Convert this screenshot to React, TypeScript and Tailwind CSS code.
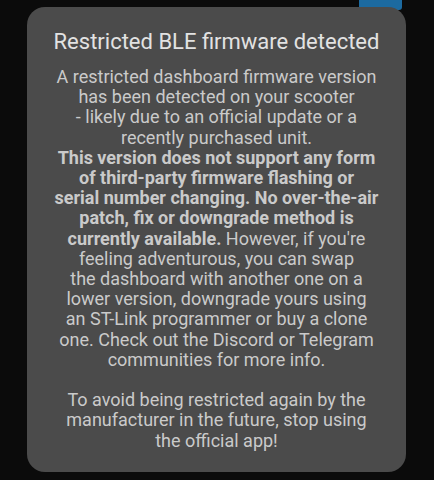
import React from "react";

const Line: React.FC<{ children: React.ReactNode }> = ({ children }) => <div className="whitespace-nowrap">{children}</div>;

export default function App() {
  return (
    <div className="relative h-[480px] w-full overflow-hidden bg-[#0b0b0b]" style={{ fontFamily: "Roboto, 'Noto Sans', sans-serif" }}>
      {/* button peeking out behind the dialog */}
      <div className="absolute left-[359px] top-0 h-[10px] w-[43px] rounded-b-[3px] bg-[#1c6aa0]" />
      <div className="relative ml-[27px] mt-[7px] w-[379px] rounded-[18px] bg-[#4b4b4b] px-2 pt-[22px] pb-[21px] text-center">
        <h1 className="text-[22px] leading-[26px] text-[#e2e2e2]">Restricted BLE firmware detected</h1>
        <div className="mt-[12px] text-[18px] leading-[20.2px] text-[#cacaca]">
          <Line>A restricted dashboard firmware version</Line>
          <Line>has been detected on your scooter</Line>
          <Line>- likely due to an official update or a</Line>
          <Line>recently purchased unit.</Line>
          <Line><b>This version does not support any form</b></Line>
          <Line><b>of third-party firmware flashing or</b></Line>
          <Line><b>serial number changing. No over-the-air</b></Line>
          <Line><b>patch, fix or downgrade method is</b></Line>
          <Line><b>currently available.</b> However, if you're</Line>
          <Line>feeling adventurous, you can swap</Line>
          <Line>the dashboard with another one on a</Line>
          <Line>lower version, downgrade yours using</Line>
          <Line>an ST-Link programmer or buy a clone</Line>
          <Line>one. Check out the Discord or Telegram</Line>
          <Line>communities for more info.</Line>
          <div className="h-[20.2px]" />
          <Line>To avoid being restricted again by the</Line>
          <Line>manufacturer in the future, stop using</Line>
          <Line>the official app!</Line>
        </div>
      </div>
    </div>
  );
}
